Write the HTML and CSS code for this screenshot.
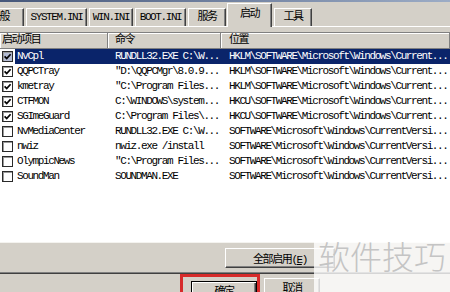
FILE: index.html
```html
<!DOCTYPE html>
<html lang="zh-CN">
<head>
  <meta charset="UTF-8">
  <meta name="viewport" content="width=device-width, initial-scale=1.0">
  <title>系统配置实用程序 - 启动</title>
  <link rel="stylesheet" href="styles.css">
</head>
<body class="body">
  <div class="dialog">
    <div class="title-edge"></div>
    <!-- Вкладки диалога -->
    <ul class="tabs">
      <li class="tab tab-general">一般</li>
      <li class="tab tab-system">SYSTEM.INI</li>
      <li class="tab tab-win">WIN.INI</li>
      <li class="tab tab-boot">BOOT.INI</li>
      <li class="tab tab-services">服务</li>
      <li class="tab tab-startup active">启动</li>
      <li class="tab tab-tools">工具</li>
    </ul>
    <div class="panel">
      <div class="list">
        <div class="list-head">
          <div class="head-cell col-name">启动项目</div>
          <div class="head-cell col-cmd">命令</div>
          <div class="head-cell col-loc">位置</div>
        </div>
        <div class="row selected">
          <div class="cell col-name"><span class="check checked"></span><span class="label">NvCpl</span></div>
          <div class="cell col-cmd">RUNDLL32.EXE C:\W...</div>
          <div class="cell col-loc">HKLM\SOFTWARE\Microsoft\Windows\Current...</div>
        </div>
        <div class="row">
          <div class="cell col-name"><span class="check checked"></span><span class="label">QQPCTray</span></div>
          <div class="cell col-cmd">"D:\QQPCMgr\8.0.9...</div>
          <div class="cell col-loc">HKLM\SOFTWARE\Microsoft\Windows\Current...</div>
        </div>
        <div class="row">
          <div class="cell col-name"><span class="check checked"></span><span class="label">kmetray</span></div>
          <div class="cell col-cmd">"C:\Program Files...</div>
          <div class="cell col-loc">HKLM\SOFTWARE\Microsoft\Windows\Current...</div>
        </div>
        <div class="row">
          <div class="cell col-name"><span class="check checked"></span><span class="label">CTFMON</span></div>
          <div class="cell col-cmd">C:\WINDOWS\system...</div>
          <div class="cell col-loc">HKCU\SOFTWARE\Microsoft\Windows\Current...</div>
        </div>
        <div class="row">
          <div class="cell col-name"><span class="check checked"></span><span class="label">SGImeGuard</span></div>
          <div class="cell col-cmd">C:\Program Files\...</div>
          <div class="cell col-loc">HKCU\SOFTWARE\Microsoft\Windows\Current...</div>
        </div>
        <div class="row">
          <div class="cell col-name"><span class="check"></span><span class="label">NvMediaCenter</span></div>
          <div class="cell col-cmd">RUNDLL32.EXE C:\W...</div>
          <div class="cell col-loc">SOFTWARE\Microsoft\Windows\CurrentVersi...</div>
        </div>
        <div class="row">
          <div class="cell col-name"><span class="check"></span><span class="label">nwiz</span></div>
          <div class="cell col-cmd">nwiz.exe /install</div>
          <div class="cell col-loc">SOFTWARE\Microsoft\Windows\CurrentVersi...</div>
        </div>
        <div class="row">
          <div class="cell col-name"><span class="check"></span><span class="label">OlympicNews</span></div>
          <div class="cell col-cmd">"C:\Program Files...</div>
          <div class="cell col-loc">SOFTWARE\Microsoft\Windows\CurrentVersi...</div>
        </div>
        <div class="row">
          <div class="cell col-name"><span class="check"></span><span class="label">SoundMan</span></div>
          <div class="cell col-cmd">SOUNDMAN.EXE</div>
          <div class="cell col-loc">SOFTWARE\Microsoft\Windows\CurrentVersi...</div>
        </div>
      </div>
      <div class="panel-actions">
        <button class="btn btn-wide">全部启用(<u>E</u>)</button>
      </div>
    </div>
    <div class="footer">
      <div class="mark-box">
        <button class="btn btn-default">确定</button>
      </div>
      <button class="btn btn-cancel">取消</button>
    </div>
    <!-- Водяной знак поверх диалога -->
    <div class="watermark">软件技巧</div>
  </div>
</body>
</html>
```

FILE: styles.css
```css
.body {
  margin: 0;
  width: 450px;
  height: 292px;
  overflow: hidden;
  background-color: #d4d0c8;
  font-family: "Liberation Mono", "Noto Sans CJK SC", monospace;
  font-size: 11px;
  letter-spacing: -1.4px;
  color: #000000;
}
.dialog {
  position: relative;
  height: 292px;
  overflow: hidden;
}
.title-edge {
  height: 2px;
  background: linear-gradient(90deg, #46577a, #9cacc6);
}
.tabs {
  position: relative;
  z-index: 1;
  display: flex;
  align-items: flex-end;
  height: 24px;
  margin: 0;
  padding: 0;
  list-style: none;
}
.tab {
  box-sizing: border-box;
  height: 18px;
  margin-right: 2px;
  border-top: 1px solid #ffffff;
  border-left: 1px solid #ffffff;
  border-right: 1px solid #404040;
  box-shadow: inset -1px 0 #808080;
  line-height: 17px;
  text-align: center;
  white-space: nowrap;
  overflow: hidden;
}
.tab-general {
  margin-left: -16px;
  width: 40px;
  padding-left: 5px;
  text-align: left;
}
.tab-system {
  width: 61px;
}
.tab-win {
  width: 44px;
}
.tab-boot {
  width: 51px;
}
.tab-services {
  width: 38px;
  margin-right: 1px;
}
.tab-startup {
  width: 45px;
}
.tab-tools {
  width: 38px;
}
.tab.active {
  height: 24px;
  margin-bottom: -1px;
  padding-top: 3px;
  line-height: 14px;
  background-color: #d4d0c8;
}
.panel {
  padding-top: 5px;
  border-top: 1px solid #ffffff;
  border-bottom: 1px solid #808080;
  box-shadow: 0 1px #404040;
}
.list {
  box-sizing: border-box;
  height: 211px;
  background-color: #ffffff;
  border-top: 1px solid #808080;
  border-bottom: 1px solid #f4f3ef;
}
.list-head {
  display: flex;
  height: 16px;
}
.head-cell {
  box-sizing: border-box;
  height: 16px;
  background-color: #d4d0c8;
  border-right: 1px solid #808080;
  border-bottom: 1px solid #808080;
  box-shadow: inset 1px 1px #ffffff;
  line-height: 15px;
  white-space: nowrap;
}
.col-name {
  width: 108px;
  flex: none;
}
.col-cmd {
  width: 113px;
  flex: none;
  padding-left: 7px;
}
.col-loc {
  flex: 1;
  padding-left: 8px;
}
.head-cell.col-name {
  padding-left: 2px;
}
.row {
  display: flex;
  height: 15px;
  line-height: 15px;
}
.cell {
  box-sizing: border-box;
  white-space: nowrap;
  overflow: hidden;
}
.cell.col-name {
  display: flex;
  align-items: center;
  padding-left: 2px;
}
.check {
  box-sizing: border-box;
  width: 11px;
  height: 11px;
  flex: none;
  border: 1px solid #2a2a2a;
  box-shadow: inset 1px 1px #9a9a9a;
  background-color: #ffffff;
}
.check.checked {
  background-image: url("data:image/svg+xml;utf8,<svg xmlns='http://www.w3.org/2000/svg' viewBox='0 0 9 9'><path d='M1.6 4.4 L3.7 6.6 L7.6 2.2' fill='none' stroke='black' stroke-width='1.7'/></svg>");
  background-repeat: no-repeat;
  background-position: center;
  background-size: 9px 9px;
}
.label {
  flex: 1;
  height: 15px;
  margin-left: 2px;
  padding-left: 2px;
}
.row.selected .check {
  background-color: #b3bbd3;
}
.row.selected .label,
.row.selected .col-cmd,
.row.selected .col-loc {
  background-color: #0a246a;
  color: #ffffff;
}
.panel-actions {
  height: 29px;
  padding-top: 5px;
  box-sizing: border-box;
}
.btn {
  box-sizing: border-box;
  padding: 0;
  font-family: "Liberation Mono", "Noto Sans CJK SC", monospace;
  font-size: 11px;
  letter-spacing: -1.4px;
  color: #000000;
  background-color: #d4d0c8;
  border: 1px solid;
  border-color: #ffffff #404040 #404040 #ffffff;
  box-shadow: inset -1px -1px #808080;
}
.btn-wide {
  display: block;
  width: 110px;
  height: 20px;
  margin-left: 225px;
}
.footer {
  display: flex;
  align-items: flex-start;
  height: 19px;
  padding: 1px 0 0 180px;
  box-sizing: border-box;
  overflow: hidden;
}
.mark-box {
  height: 30px;
  padding: 4px 0 0 8px;
  border: 3px solid #d62a2a;
}
.btn-default {
  width: 66px;
  height: 22px;
  padding-bottom: 4px;
  border: 1px solid #000000;
  box-shadow: inset 1px 1px #ffffff, inset -1px -1px #404040, inset -2px -2px #808080;
}
.btn-cancel {
  width: 56px;
  height: 22px;
  margin: 4px 0 0 4px;
  padding-bottom: 6px;
}
.watermark {
  position: absolute;
  left: 314px;
  top: 236px;
  width: 136px;
  height: 56px;
  padding-left: 4px;
  box-sizing: border-box;
  background-color: rgba(255, 255, 255, 0.78);
  font-family: "Noto Sans CJK SC", sans-serif;
  font-size: 32px;
  font-weight: 300;
  line-height: 38px;
  letter-spacing: 0;
  color: #c4c4c4;
}
```
